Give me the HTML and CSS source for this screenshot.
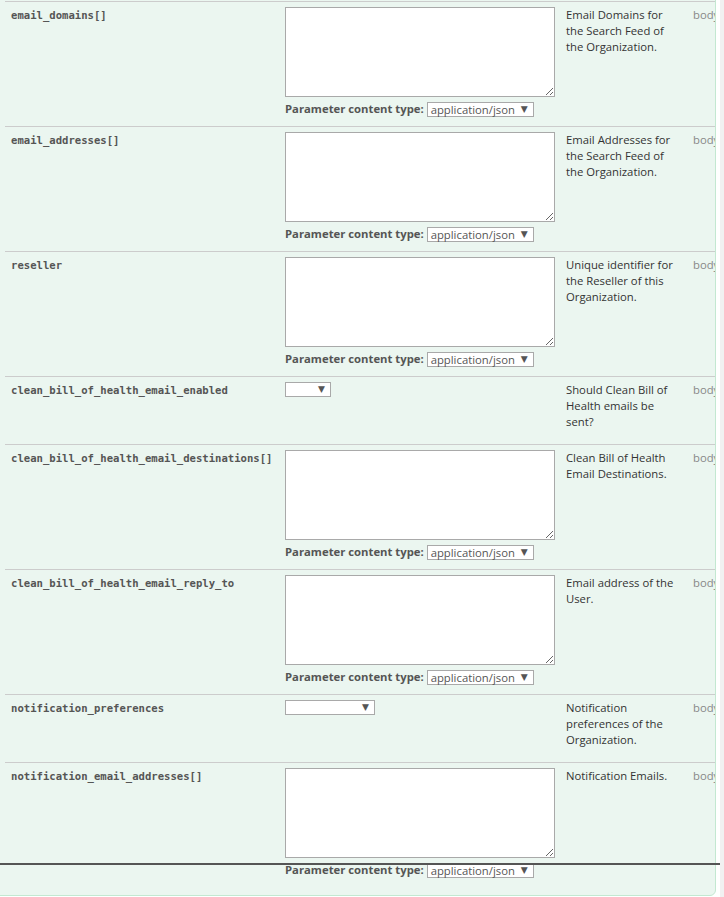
FILE: index.html
```html
<!DOCTYPE html>
<html>
<head>
<meta charset="utf-8">
<link rel="stylesheet" href="styles.css">
</head>
<body>
<div class="page">
  <div class="main">
    <div class="panel">
      <table class="params">
        <colgroup>
          <col class="c-name"><col class="c-val"><col class="c-desc"><col class="c-type">
        </colgroup>
        <tbody>
          <tr>
            <td class="code">email_domains[]</td>
            <td class="val"><textarea class="body-input"></textarea><div class="ctype"><b>Parameter content type:</b> <span class="sel sel-ct">application/json<span class="arrow">▼</span></span></div></td>
            <td class="desc"><p>Email Domains for the Search Feed of the Organization.</p></td>
            <td class="ptype">body</td>
          </tr>
          <tr>
            <td class="code">email_addresses[]</td>
            <td class="val"><textarea class="body-input"></textarea><div class="ctype"><b>Parameter content type:</b> <span class="sel sel-ct">application/json<span class="arrow">▼</span></span></div></td>
            <td class="desc"><p>Email Addresses for the Search Feed of the Organization.</p></td>
            <td class="ptype">body</td>
          </tr>
          <tr>
            <td class="code">reseller</td>
            <td class="val"><textarea class="body-input"></textarea><div class="ctype"><b>Parameter content type:</b> <span class="sel sel-ct">application/json<span class="arrow">▼</span></span></div></td>
            <td class="desc"><p>Unique identifier for the Reseller of this Organization.</p></td>
            <td class="ptype">body</td>
          </tr>
          <tr>
            <td class="code">clean_bill_of_health_email_enabled</td>
            <td class="val"><span class="sel sel-bool"><span class="arrow">▼</span></span></td>
            <td class="desc"><p>Should Clean Bill of Health emails be sent?</p></td>
            <td class="ptype">body</td>
          </tr>
          <tr>
            <td class="code">clean_bill_of_health_email_destinations[]</td>
            <td class="val"><textarea class="body-input"></textarea><div class="ctype"><b>Parameter content type:</b> <span class="sel sel-ct">application/json<span class="arrow">▼</span></span></div></td>
            <td class="desc"><p>Clean Bill of Health Email Destinations.</p></td>
            <td class="ptype">body</td>
          </tr>
          <tr>
            <td class="code">clean_bill_of_health_email_reply_to</td>
            <td class="val"><textarea class="body-input"></textarea><div class="ctype"><b>Parameter content type:</b> <span class="sel sel-ct">application/json<span class="arrow">▼</span></span></div></td>
            <td class="desc"><p>Email address of the User.</p></td>
            <td class="ptype">body</td>
          </tr>
          <tr>
            <td class="code">notification_preferences</td>
            <td class="val"><span class="sel sel-pref"><span class="arrow">▼</span></span></td>
            <td class="desc"><p>Notification preferences of the Organization.</p></td>
            <td class="ptype">body</td>
          </tr>
          <tr>
            <td class="code">notification_email_addresses[]</td>
            <td class="val"><textarea class="body-input"></textarea><div class="ctype"><b>Parameter content type:</b> <span class="sel sel-ct">application/json<span class="arrow">▼</span></span></div></td>
            <td class="desc"><p>Notification Emails.</p></td>
            <td class="ptype">body</td>
          </tr>
        </tbody>
      </table>
    </div>
    <div class="seam"></div>
  </div>
  <div class="scroll-track"></div>
</div>
</body>
</html>
```
FILE: styles.css
```css
html, body {
  margin: 0;
  padding: 0;
  background: #ffffff;
}
body {
  font-family: "Open Sans", "Liberation Sans", sans-serif;
  font-size: 11.3px;
  color: #333333;
  overflow: hidden;
}
.page {
  display: flex;
  width: 724px;
  height: 897px;
  overflow: hidden;
}
.main {
  position: relative;
  width: 720px;
  flex: none;
}
.scroll-track {
  flex: 1;
  background: #f1f1f1;
}
.panel {
  margin: -10px 0 0 -20px;
  width: 710px;
  border: 1px solid #c3e8d1;
  border-radius: 0 0 6px 6px;
  background: #ebf6f0;
  padding: 10px 0 8px 24px;
  overflow: hidden;
}
.params {
  border-collapse: collapse;
  table-layout: fixed;
  width: 782px;
}
.c-name { width: 274px; }
.c-val { width: 281px; }
.c-desc { width: 127px; }
.c-type { width: 100px; }
.params td {
  border-top: 1px solid #cccccc;
  padding: 5px 6px 6px 6px;
  vertical-align: top;
  text-align: left;
}
.code {
  font-family: "DejaVu Sans Mono", "Liberation Mono", monospace;
  font-size: 10.6px;
  font-weight: bold;
  color: #555555;
  line-height: 16px;
  white-space: nowrap;
}
.body-input {
  display: block;
  box-sizing: border-box;
  width: 270px;
  height: 90px;
  margin: 0;
  border: 1px solid #a9a9a9;
  background: #ffffff;
  padding: 2px;
  font-family: "DejaVu Sans Mono", monospace;
  font-size: 12px;
}
.ctype {
  padding-top: 3px;
  line-height: 18px;
  height: 20px;
  color: #555555;
  white-space: nowrap;
}
.ctype b {
  font-weight: bold;
  color: #555555;
}
.sel {
  position: relative;
  display: inline-block;
  box-sizing: border-box;
  height: 15px;
  line-height: 13px;
  border: 1px solid #a9a9a9;
  background: #ffffff;
  color: #555555;
  font-size: 11.3px;
  padding: 0 0 0 3px;
  vertical-align: middle;
}
.sel-ct {
  width: 107px;
  margin-left: 0;
  vertical-align: 0;
  position: relative;
  top: 1px;
}
.sel-bool { width: 46px; }
.sel-pref { width: 90px; }
.val > .sel { display: block; }
.arrow {
  position: absolute;
  right: 5px;
  top: 0;
  font-family: "DejaVu Sans", sans-serif;
  font-size: 9px;
  line-height: 13px;
  color: #555555;
}
.desc p {
  margin: 0;
  padding: 0 0 8px 0;
  line-height: 16px;
  color: #333333;
}
.ptype {
  line-height: 16px;
  color: #888888;
}
.seam {
  position: absolute;
  left: 0;
  top: 863px;
  width: 720px;
  height: 2px;
  background: #555555;
}
```
